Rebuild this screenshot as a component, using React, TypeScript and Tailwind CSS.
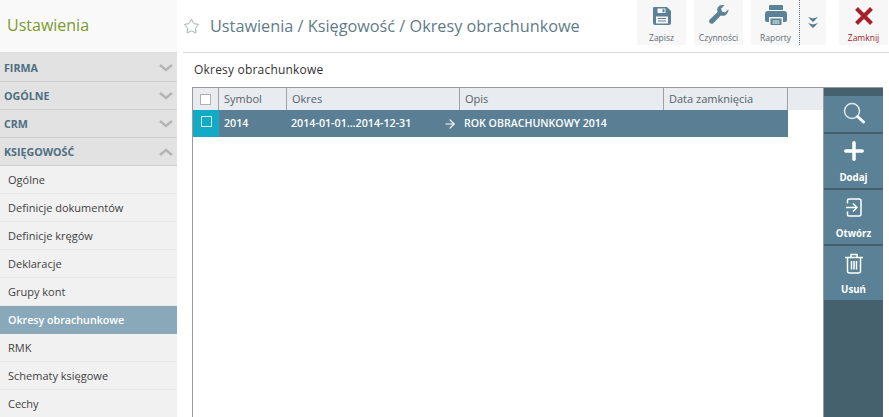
import React from "react";
import { Star, Plus, ArrowRight } from "lucide-react";

function Save() {
  return (
    <svg width="20" height="20" viewBox="0 0 20 20">
      <path fill="#5a8196" fillRule="evenodd" d="M2 1h13l4 4v12a2 2 0 0 1-2 2H3a2 2 0 0 1-2-2V2a1 1 0 0 1 1-1zM5.500 2.500v4.500h8V2.500zM10.500 3.200h2v3h-2zM4 10.500v7h12v-7zM6 12h8v1H6zM6 14.500h8v1H6z" />
    </svg>
  );
}
function Wrench() {
  return (
    <svg width="22" height="22" viewBox="0 0 22 22">
      <path fill="#5a8196" d="M20.500 5.200l-3.400 3.200-3.200-.8-.8-3 3.400-3.300c-2.400-.8-5.200-.2-6.500 1.900-1 1.500-1 3.300-.4 4.700L2 15.300c-1.200 1.200-1.200 2.800-.2 3.800s2.700 1 3.800-.1l7.100-7.500c1.600.6 3.500.4 5-.6 2-1.400 2.900-3.700 2.800-5.700z" />
    </svg>
  );
}
function Printer() {
  return (
    <svg width="24" height="22" viewBox="0 0 24 22">
      <path fill="#5a8196" fillRule="evenodd" d="M6 1h12a1 1 0 0 1 1 1v4H5V2a1 1 0 0 1 1-1zM4 7h16a3 3 0 0 1 3 3v6a2 2 0 0 1-2 2h-2v-5H5v5H3a2 2 0 0 1-2-2v-6a3 3 0 0 1 3-3zM6.500 14.500h11V20a1 1 0 0 1-1 1h-9a1 1 0 0 1-1-1zM8.500 16.500v1h7v-1zM8.500 18.500v1h7v-1z" />
    </svg>
  );
}
function DoubleDown() {
  return (
    <svg width="10" height="11" viewBox="0 0 10 11">
      <path fill="#4f7a90" d="M0 0l5 1.500L10 0 5 5zM0 6l5 1.500L10 6l-5 5z" />
    </svg>
  );
}
function CloseX() {
  return (
    <svg width="20" height="20" viewBox="0 0 20 20">
      <path fill="none" stroke="#a3202c" strokeWidth="4" d="M2.500 2.500l15 15M17.500 2.500l-15 15" />
    </svg>
  );
}
function SearchIcon() {
  return (
    <svg width="24" height="24" viewBox="0 0 24 24" fill="none">
      <circle cx="10" cy="10" r="7.500" stroke="#dfe8ec" strokeWidth="1.500" />
      <path d="M15.500 15.500l6 5.500" stroke="#fff" strokeWidth="3" strokeLinecap="round" />
    </svg>
  );
}
function OpenIcon() {
  return (
    <svg width="18" height="19" viewBox="0 0 18 19" fill="none" stroke="#fff" strokeWidth="1.500">
      <path d="M2.500 5.500V2.500a1.500 1.500 0 0 1 1.500-1.500h10a2 2 0 0 1 2 2v13a2 2 0 0 1-2 2H4a1.500 1.500 0 0 1-1.500-1.500v-3" />
      <path d="M1 9.500h10.500M8 5.500l4 4-4 4" />
    </svg>
  );
}
function Trash() {
  return (
    <svg width="20" height="21" viewBox="0 0 20 21" fill="none" stroke="#fff" strokeWidth="1.500">
      <path d="M1 4.500h18M7 4.500V1.500h6v3M3.500 4.500V18a2 2 0 0 0 2 2h9a2 2 0 0 0 2-2V4.500" />
      <path d="M7.500 8v8.500M10 8v8.500M12.500 8v8.500" />
    </svg>
  );
}
function Chevron({ up }: { up?: boolean }) {
  return (
    <svg width="14" height="8" viewBox="0 0 14 8" fill="none">
      <path d={up ? "M1 7l6-5 6 5" : "M1 1l6 5 6-5"} stroke="#b4b4b4" strokeWidth="2.400" />
    </svg>
  );
}

function TopAction({ icon, label, red }: { icon: React.ReactNode; label: string; red?: boolean }) {
  return (
    <div className="flex h-[45px] w-[49px] flex-col items-center bg-[#f7f7f7]">
      <div className="flex h-[26px] items-end justify-center">{icon}</div>
      <div className={`mt-[6px] text-[8.500px] leading-[12px] ${red ? "text-[#a3202c]" : "text-[#5f6b72]"}`}>{label}</div>
    </div>
  );
}

function Section({ label, open }: { label: string; open?: boolean }) {
  return (
    <div className="flex h-[28px] shrink-0 items-center justify-between border-b border-[#cfcfcf] bg-[#e2e2e2] pl-[4px] pr-[4px]">
      <span className="pt-[1px] text-[10.700px] font-bold text-[#4d6f80]">{label}</span>
      <Chevron up={open} />
    </div>
  );
}

function Item({ label, active }: { label: string; active?: boolean }) {
  return (
    <div
      className={`flex h-[28px] shrink-0 items-center pl-[8px] pt-[1px] ${
        active
          ? "bg-[#89a9ba] text-[10.700px] font-semibold text-white"
          : "border-b border-[#e8e8e8] text-[11px] text-[#3f3f3f]"
      }`}
    >
      {label}
    </div>
  );
}

function Head({ label, w }: { label: string; w: string }) {
  return (
    <div className={`flex items-center border-r border-[#a0a0a0] pl-[5px] text-[11px] text-[#55636b] ${w}`}>
      {label}
    </div>
  );
}

function ToolBtn({ icon, label, h }: { icon: React.ReactNode; label?: string; h: string }) {
  return (
    <div className={`flex shrink-0 flex-col items-center border-b-2 border-[#46616e] bg-[#5a8196] pt-[4px] ${h}`}>
      <div className="flex h-[26px] items-center justify-center">{icon}</div>
      {label && <div className="mt-[7px] text-[9.700px] font-bold leading-[14px] text-white">{label}</div>}
    </div>
  );
}

export default function App() {
  return (
    <div className="flex h-[417px] w-[889px] overflow-hidden bg-white" style={{ fontFamily: '"Open Sans", "Noto Sans", sans-serif' }}>
      <aside className="flex w-[177px] shrink-0 flex-col bg-[#f1f1f1]">
        <div className="flex h-[54px] shrink-0 items-center border-b-2 border-[#dedede] bg-[#f9f9f9] pb-[2px] pl-[7px] text-[16px] text-[#7a9a2e]">
          Ustawienia
        </div>
        <Section label="FIRMA" />
        <Section label="OGÓLNE" />
        <Section label="CRM" />
        <Section label="KSIĘGOWOŚĆ" open />
        <Item label="Ogólne" />
        <Item label="Definicje dokumentów" />
        <Item label="Definicje kręgów" />
        <Item label="Deklaracje" />
        <Item label="Grupy kont" />
        <Item label="Okresy obrachunkowe" active />
        <Item label="RMK" />
        <Item label="Schematy księgowe" />
        <Item label="Cechy" />
      </aside>
      <main className="flex min-w-0 flex-1 flex-col">
        <header className="ml-[6px] flex h-[53px] shrink-0 items-start border-b border-[#d8d8d8]">
          <div className="flex h-[52px] flex-1 items-center">
            <Star size={17} strokeWidth={1.300} color="#9aa5aa" />
            <span className="ml-[10px] text-[16.250px] text-[#5f7b8a]">Ustawienia / Księgowość / Okresy obrachunkowe</span>
          </div>
          <div className="flex items-start pr-[1px]">
            <TopAction icon={<Save />} label="Zapisz" />
            <div className="w-[8px]" />
            <TopAction icon={<Wrench />} label="Czynności" />
            <div className="w-[8px]" />
            <TopAction icon={<Printer />} label="Raporty" />
            <div className="-ml-[1px] flex h-[45px] w-[27px] items-center justify-center border-l border-dotted border-[#4f6c7c] bg-[#f7f7f7]">
              <DoubleDown />
            </div>
            <div className="w-[13px]" />
            <TopAction icon={<CloseX />} label="Zamknij" red />
          </div>
        </header>
        <div className="flex h-[34px] shrink-0 items-center pl-[17px] text-[12px] tracking-[0.2px] text-[#333]">
          Okresy obrachunkowe
        </div>
        <div className="ml-[15px] flex min-h-0 flex-1">
          <div className="flex w-[631px] shrink-0 flex-col border-l border-t border-[#9a9a9a]">
            <div className="flex h-[22px] shrink-0 bg-[#e8ebef]">
              <div className="flex w-[26px] items-center justify-center border-r border-[#a0a0a0]">
                <div className="h-[11px] w-[11px] border border-[#b0b0b0] bg-white" />
              </div>
              <Head label="Symbol" w="w-[68px]" />
              <Head label="Okres" w="w-[173px]" />
              <Head label="Opis" w="w-[204px]" />
              <Head label="Data zamknięcia" w="w-[124px]" />
            </div>
            <div className="flex h-[27px] w-[595px] shrink-0 bg-[#5a7f94] text-[10.700px] font-semibold text-white">
              <div className="flex w-[26px] items-start justify-center bg-[#12aac4] pt-[6px]">
                <div className="h-[11px] w-[11px] border border-white/80" />
              </div>
              <div className="flex w-[68px] items-center pl-[5px]">2014</div>
              <div className="flex w-[173px] items-center justify-between pl-[4px] pr-[3px]">
                <span>2014-01-01...2014-12-31</span>
                <ArrowRight size={14} strokeWidth={2} color="#fff" />
              </div>
              <div className="flex items-center pl-[4px] text-[10.600px]">ROK OBRACHUNKOWY 2014</div>
            </div>
          </div>
          <div className="flex w-[60px] shrink-0 flex-col border-l border-t border-[#9a9a9a] bg-[#46616e]">
            <div className="h-[8px] shrink-0" />
            <ToolBtn icon={<SearchIcon />} h="h-[38px]" />
            <ToolBtn icon={<Plus size={28} strokeWidth={3} color="#fff" />} label="Dodaj" h="h-[56px]" />
            <ToolBtn icon={<OpenIcon />} label="Otwórz" h="h-[56px]" />
            <ToolBtn icon={<Trash />} label="Usuń" h="h-[56px]" />
          </div>
          <div className="w-[6px] shrink-0" />
        </div>
      </main>
    </div>
  );
}
